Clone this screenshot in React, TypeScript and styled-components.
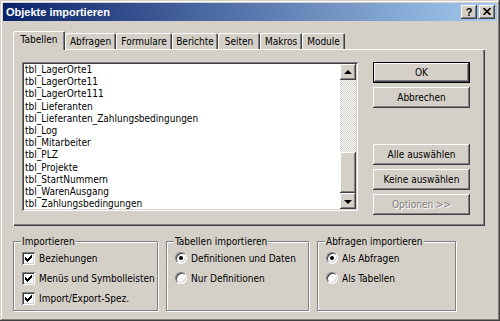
import React from "react";
import styled, { createGlobalStyle } from "styled-components";

const face = "#D4D0C8";
const shadow = "#808080";
const dark = "#404040";

const raised = `inset -1px -1px ${dark}, inset 1px 1px #fff, inset -2px -2px ${shadow}, inset 2px 2px ${face}`;
const sunken = `inset 1px 1px ${shadow}, inset -1px -1px #fff, inset 2px 2px ${dark}, inset -2px -2px ${face}`;

const GlobalStyle = createGlobalStyle`
  html, body {
    margin: 0;
    padding: 0;
    background: ${face};
  }
  body {
    font-family: "DejaVu Sans Condensed", "Liberation Sans", Arial, sans-serif;
    font-size: 10px;
    color: #000;
  }
  * {
    box-sizing: border-box;
  }
`;

const Window = styled.div`
  width: 500px;
  height: 321px;
  padding: 3px;
  background: ${face};
  box-shadow: inset -1px -1px ${dark}, inset 1px 1px ${face},
    inset -2px -2px ${shadow}, inset 2px 2px #fff;
  display: flex;
  flex-direction: column;
`;

const TitleBar = styled.div`
  height: 18px;
  display: flex;
  align-items: center;
  padding: 0 2px 0 3px;
  background: linear-gradient(to right, #0a246a, #a6caf0);
`;

const Title = styled.div`
  flex: 1;
  color: #fff;
  font-family: "Liberation Sans", Arial, sans-serif;
  font-weight: bold;
  font-size: 11px;
`;

const TitleButton = styled.div`
  width: 16px;
  height: 14px;
  margin-left: 2px;
  background: ${face};
  box-shadow: ${raised};
  display: flex;
  align-items: center;
  justify-content: center;
  font-family: "Liberation Sans", Arial, sans-serif;
  font-weight: bold;
  font-size: 11px;
  line-height: 14px;
  padding-bottom: 1px;
`;

const Body = styled.div`
  flex: 1;
  padding: 10px 12px 0 10px;
  display: flex;
  flex-direction: column;
`;

const TabStrip = styled.div`
  height: 18px;
  display: flex;
  align-items: flex-end;
`;

const Tab = styled.div<{ $active?: boolean; $width: number }>`
  width: ${(p) => p.$width}px;
  height: ${(p) => (p.$active ? 19 : 16)}px;
  margin-bottom: ${(p) => (p.$active ? -1 : 0)}px;
  position: relative;
  z-index: ${(p) => (p.$active ? 1 : 0)};
  background: ${face};
  border-radius: 2px 2px 0 0;
  box-shadow: inset 1px 1px #fff, inset -1px 0 ${dark}, inset -2px 0 ${shadow};
  display: flex;
  align-items: center;
  justify-content: center;
  padding-bottom: ${(p) => (p.$active ? 2 : 0)}px;
  white-space: nowrap;
`;

const Panel = styled.div`
  width: 472px;
  height: 177px;
  background: ${face};
  box-shadow: inset 1px 1px #fff, inset -1px -1px ${dark},
    inset -2px -2px ${shadow};
  display: flex;
  align-items: flex-start;
  gap: 15px;
  padding: 13px 15px 0 9px;
`;

const ListBox = styled.div`
  width: 336px;
  height: 149px;
  padding: 2px;
  background: #fff;
  box-shadow: ${sunken};
  display: flex;
`;

const ListItems = styled.div`
  flex: 1;
  overflow: hidden;
  padding: 0 0 0 1px;
`;

const ListItem = styled.div`
  height: 12.2px;
  line-height: 12px;
  white-space: nowrap;
  color: #000;
`;

const ScrollBar = styled.div`
  width: 16px;
  display: flex;
  flex-direction: column;
`;

const ArrowButton = styled.div<{ $down?: boolean }>`
  height: 16px;
  background: ${face};
  box-shadow: ${raised};
  display: flex;
  align-items: center;
  justify-content: center;

  &::after {
    content: "";
    width: 0;
    height: 0;
    border-left: 4px solid transparent;
    border-right: 4px solid transparent;
    ${(p) =>
      p.$down
        ? "border-top: 4px solid #000; margin-top: 1px;"
        : "border-bottom: 4px solid #000; margin-bottom: 1px;"}
  }
`;

const Track = styled.div`
  flex: 1;
  display: flex;
  flex-direction: column;
  justify-content: flex-end;
  background: repeating-conic-gradient(#fff 0 25%, ${face} 0 50%) 0 0 / 2px 2px;
`;

const Thumb = styled.div`
  height: 41px;
  background: ${face};
  box-shadow: ${raised};
`;

const ButtonColumn = styled.div`
  width: 97px;
  display: flex;
  flex-direction: column;
  gap: 4px;
`;

const Button = styled.div<{
  $default?: boolean;
  $disabled?: boolean;
  $gapBefore?: number;
}>`
  height: 21px;
  margin-top: ${(p) => p.$gapBefore ?? 0}px;
  background: ${face};
  border: ${(p) => (p.$default ? "1px solid #000" : "none")};
  box-shadow: ${raised};
  display: flex;
  align-items: center;
  justify-content: center;
  color: ${(p) => (p.$disabled ? shadow : "#000")};
  text-shadow: ${(p) => (p.$disabled ? "1px 1px 0 #fff" : "none")};
  white-space: nowrap;
`;

const Groups = styled.div`
  display: flex;
  align-items: stretch;
  gap: 8px;
  margin-top: 9px;
`;

const GroupBox = styled.fieldset<{ $width: number }>`
  width: ${(p) => p.$width}px;
  margin: 0;
  padding: 0 6px 2px 8px;
  min-width: 0;
  border: 1px solid ${shadow};
  box-shadow: inset 1px 1px #fff, 1px 1px 0 #fff;
`;

const Legend = styled.legend`
  margin-left: -1px;
  padding: 0 1px;
  line-height: 13px;
  background: ${face};
`;

const OptionRow = styled.div`
  height: 20px;
  display: flex;
  align-items: center;
  gap: 4px;
  white-space: nowrap;
`;

const CheckBox = styled.div`
  width: 13px;
  height: 13px;
  flex: none;
  background: #fff;
  box-shadow: ${sunken};
  display: flex;
`;

const Radio = styled.div`
  width: 12px;
  height: 12px;
  flex: none;
  border-radius: 50%;
  border: 1px solid;
  border-color: ${shadow} #fff #fff ${shadow};
  background: #fff;
  box-shadow: inset 1px 1px ${dark}, inset -1px -1px ${face};
  display: flex;
  align-items: center;
  justify-content: center;
`;

const RadioDot = styled.div`
  width: 4px;
  height: 4px;
  border-radius: 50%;
  background: #000;
`;

const tabs = [
  { label: "Tabellen", width: 52 },
  { label: "Abfragen", width: 51 },
  { label: "Formulare", width: 56 },
  { label: "Berichte", width: 46 },
  { label: "Seiten", width: 42 },
  { label: "Makros", width: 42 },
  { label: "Module", width: 43 },
];

const tables = [
  "tbl_LagerOrte1",
  "tbl_LagerOrte11",
  "tbl_LagerOrte111",
  "tbl_Lieferanten",
  "tbl_Lieferanten_Zahlungsbedingungen",
  "tbl_Log",
  "tbl_Mitarbeiter",
  "tbl_PLZ",
  "tbl_Projekte",
  "tbl_StartNummern",
  "tbl_WarenAusgang",
  "tbl_Zahlungsbedingungen",
];

function CheckOption({ label }: { label: string }) {
  return (
    <OptionRow>
      <CheckBox>
        <svg width="13" height="13" viewBox="0 0 13 13" shapeRendering="crispEdges">
          <path d="M3 5 L5 7 L10 2 V5 L5 10 L3 8 Z" fill="#000" />
        </svg>
      </CheckBox>
      <span>{label}</span>
    </OptionRow>
  );
}

function RadioOption({ label, checked }: { label: string; checked?: boolean }) {
  return (
    <OptionRow>
      <Radio>{checked && <RadioDot />}</Radio>
      <span>{label}</span>
    </OptionRow>
  );
}

export default function App() {
  return (
    <>
      <GlobalStyle />
      <Window>
        <TitleBar>
          <Title>Objekte importieren</Title>
          <TitleButton>?</TitleButton>
          <TitleButton>
            <svg width="8" height="7" viewBox="0 0 8 7">
              <path d="M0.5 0 L7.5 7 M7.5 0 L0.5 7" stroke="#000" strokeWidth="1.7" />
            </svg>
          </TitleButton>
        </TitleBar>

        <Body>
          <TabStrip>
            {tabs.map((t, i) => (
              <Tab key={t.label} $active={i === 0} $width={t.width}>
                {t.label}
              </Tab>
            ))}
          </TabStrip>

          <Panel>
            <ListBox>
              <ListItems>
                {tables.map((name) => (
                  <ListItem key={name}>{name}</ListItem>
                ))}
              </ListItems>
              <ScrollBar>
                <ArrowButton />
                <Track>
                  <Thumb />
                </Track>
                <ArrowButton $down />
              </ScrollBar>
            </ListBox>

            <ButtonColumn>
              <Button $default>OK</Button>
              <Button>Abbrechen</Button>
              <Button $gapBefore={32}>Alle auswählen</Button>
              <Button>Keine auswählen</Button>
              <Button $disabled>Optionen &gt;&gt;</Button>
            </ButtonColumn>
          </Panel>

          <Groups>
            <GroupBox $width={145}>
              <Legend>Importieren</Legend>
              <CheckOption label="Beziehungen" />
              <CheckOption label="Menüs und Symbolleisten" />
              <CheckOption label="Import/Export-Spez." />
            </GroupBox>
            <GroupBox $width={143}>
              <Legend>Tabellen importieren</Legend>
              <RadioOption label="Definitionen und Daten" checked />
              <RadioOption label="Nur Definitionen" />
            </GroupBox>
            <GroupBox $width={139}>
              <Legend>Abfragen importieren</Legend>
              <RadioOption label="Als Abfragen" checked />
              <RadioOption label="Als Tabellen" />
            </GroupBox>
          </Groups>
        </Body>
      </Window>
    </>
  );
}
